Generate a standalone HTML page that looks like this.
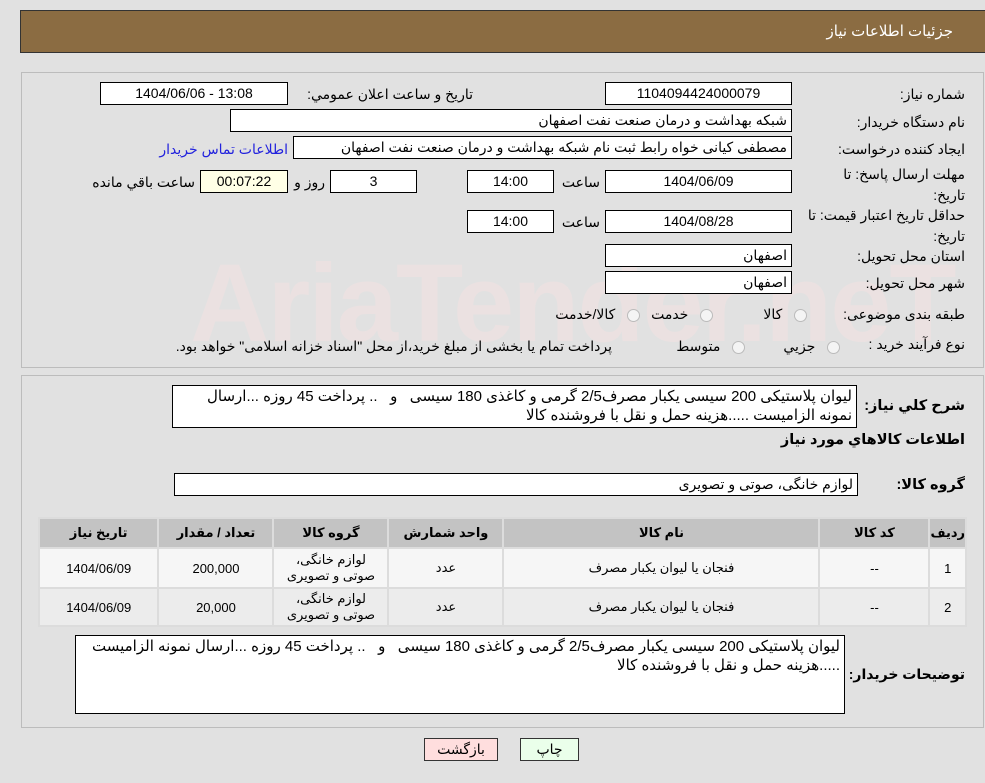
<!DOCTYPE html>
<html><head><meta charset="utf-8"><style>
body{margin:0;width:985px;height:783px;background:#e1e1e1;font-family:"Liberation Sans","DejaVu Sans",sans-serif;font-size:14px;color:#000;position:relative;overflow:hidden}
.a{position:absolute}
.box{position:absolute;background:#fff;border:1px solid #000;box-sizing:border-box;height:23px;line-height:21px;text-align:center;font-size:14px}
.r{direction:rtl;text-align:right;padding-right:4px}
.lbl{position:absolute;direction:rtl;text-align:right;white-space:nowrap}
.b{font-weight:bold;font-size:14.5px}
table{border-collapse:separate;border-spacing:2px;background:#dcdcdc}
td,th{text-align:center;font-size:13px;padding:0}
th{background:#c3c3c3;height:28px}
.rad{display:inline-block;width:11px;height:11px;border-radius:50%;border:1px solid #bbb;background:#f4f4f4;vertical-align:middle}
.ta{position:absolute;background:#fff;border:1px solid #000;box-sizing:border-box;direction:rtl;padding:1px 4px;font-size:15px;line-height:19px}
</style></head><body>
<div class="a" style="left:20px;top:10px;width:966px;height:43px;background:#8b6c42;border:1px solid #333;box-sizing:border-box"></div>
<div class="lbl" style="right:32px;top:22px;color:#fff;font-size:15px">جزئیات اطلاعات نیاز</div>

<div class="a" style="left:21px;top:72px;width:963px;height:296px;border:1px solid #bcbcbc;box-sizing:border-box"></div>
<div class="a" style="left:190px;top:240px;font-size:110px;font-weight:bold;color:#f2e2e2;letter-spacing:-2px;opacity:.6">AriaTender.neT</div>

<div class="lbl" style="right:20px;top:86px">شماره نیاز:</div>
<div class="box" style="left:605px;top:82px;width:187px">1104094424000079</div>
<div class="lbl" style="right:512px;top:86px">تاریخ و ساعت اعلان عمومي:</div>
<div class="box" style="left:100px;top:82px;width:188px">1404/06/06 - 13:08</div>

<div class="lbl" style="right:20px;top:114px">نام دستگاه خریدار:</div>
<div class="box r" style="left:230px;top:109px;width:562px">شبکه بهداشت و درمان صنعت نفت اصفهان</div>

<div class="lbl" style="right:20px;top:141px">ایجاد کننده درخواست:</div>
<div class="box r" style="left:293px;top:136px;width:499px">مصطفی کیانی خواه رابط ثبت نام شبکه بهداشت و درمان صنعت نفت اصفهان</div>
<div class="lbl" style="right:697px;top:141px;color:#2222dd">اطلاعات تماس خریدار</div>

<div class="lbl" style="right:20px;top:164px;line-height:21px">مهلت ارسال پاسخ: تا<br>تاریخ:</div>
<div class="box" style="left:605px;top:170px;width:187px">1404/06/09</div>
<div class="lbl" style="right:385px;top:174px">ساعت</div>
<div class="box" style="left:467px;top:170px;width:87px">14:00</div>
<div class="box" style="left:330px;top:170px;width:87px">3</div>
<div class="lbl" style="right:660px;top:174px">روز و</div>
<div class="box" style="left:200px;top:170px;width:88px;background:#ffffe6">00:07:22</div>
<div class="lbl" style="right:790px;top:174px">ساعت باقي مانده</div>

<div class="lbl" style="right:20px;top:205px;line-height:21px">حداقل تاریخ اعتبار قیمت: تا<br>تاریخ:</div>
<div class="box" style="left:605px;top:210px;width:187px">1404/08/28</div>
<div class="lbl" style="right:385px;top:214px">ساعت</div>
<div class="box" style="left:467px;top:210px;width:87px">14:00</div>

<div class="lbl" style="right:20px;top:248px">استان محل تحویل:</div>
<div class="box r" style="left:605px;top:244px;width:187px">اصفهان</div>
<div class="lbl" style="right:20px;top:275px">شهر محل تحویل:</div>
<div class="box r" style="left:605px;top:271px;width:187px">اصفهان</div>

<div class="lbl" style="right:20px;top:306px">طبقه بندی موضوعی:</div>
<div class="lbl" style="right:178px;top:306px"><span class="rad"></span> &nbsp; کالا</div>
<div class="lbl" style="right:272px;top:306px"><span class="rad"></span> &nbsp; خدمت</div>
<div class="lbl" style="right:345px;top:306px"><span class="rad"></span> &nbsp; کالا/خدمت</div>

<div class="lbl" style="right:20px;top:336px">نوع فرآیند خرید :</div>
<div class="lbl" style="right:145px;top:338px"><span class="rad"></span> &nbsp; جزيي</div>
<div class="lbl" style="right:240px;top:338px"><span class="rad"></span> &nbsp; متوسط</div>
<div class="lbl" style="right:373px;top:338px">پرداخت تمام یا بخشی از مبلغ خرید،از محل "اسناد خزانه اسلامی" خواهد بود.</div>

<div class="a" style="left:21px;top:375px;width:963px;height:353px;border:1px solid #bcbcbc;box-sizing:border-box"></div>
<div class="lbl b" style="right:20px;top:398px">شرح کلي نیاز:</div>
<div class="ta" style="left:172px;top:385px;width:685px;height:43px">لیوان پلاستیکی 200 سیسی یکبار مصرف2/5 گرمی و کاغذی 180 سیسی &nbsp; و &nbsp; .. پرداخت 45 روزه ...ارسال نمونه الزامیست .....هزینه حمل و نقل با فروشنده کالا</div>
<div class="lbl b" style="right:20px;top:432px">اطلاعات کالاهاي مورد نیاز</div>
<div class="lbl b" style="right:20px;top:477px">گروه کالا:</div>
<div class="box r" style="left:174px;top:473px;width:684px">لوازم خانگی، صوتی و تصویری</div>

<table class="a" style="left:38px;top:517px;width:929px;direction:rtl">
<tr><th style="width:32px">ردیف</th><th style="width:108px">کد کالا</th><th style="width:314px">نام کالا</th><th style="width:113px">واحد شمارش</th><th style="width:113px">گروه کالا</th><th style="width:113px">تعداد / مقدار</th><th>تاریخ نیاز</th></tr>
<tr style="background:#f6f6f6;height:38px"><td>1</td><td>--</td><td>فنجان یا لیوان یکبار مصرف</td><td>عدد</td><td>لوازم خانگی،<br>صوتی و تصویری</td><td>200,000</td><td>1404/06/09</td></tr>
<tr style="background:#ececec;height:36px"><td>2</td><td>--</td><td>فنجان یا لیوان یکبار مصرف</td><td>عدد</td><td>لوازم خانگی،<br>صوتی و تصویری</td><td>20,000</td><td>1404/06/09</td></tr>
</table>

<div class="lbl b" style="right:20px;top:666px;font-size:14px">توضیحات خریدار:</div>
<div class="ta" style="left:75px;top:635px;width:770px;height:79px">لیوان پلاستیکی 200 سیسی یکبار مصرف2/5 گرمی و کاغذی 180 سیسی &nbsp; و &nbsp; .. پرداخت 45 روزه ...ارسال نمونه الزامیست .....هزینه حمل و نقل با فروشنده کالا</div>

<div class="a" style="left:520px;top:738px;width:59px;height:23px;background:#eaffea;border:1px solid #333;box-sizing:border-box;text-align:center;line-height:21px">چاپ</div>
<div class="a" style="left:424px;top:738px;width:74px;height:23px;background:#ffdede;border:1px solid #333;box-sizing:border-box;text-align:center;line-height:21px">بازگشت</div>
</body></html>
